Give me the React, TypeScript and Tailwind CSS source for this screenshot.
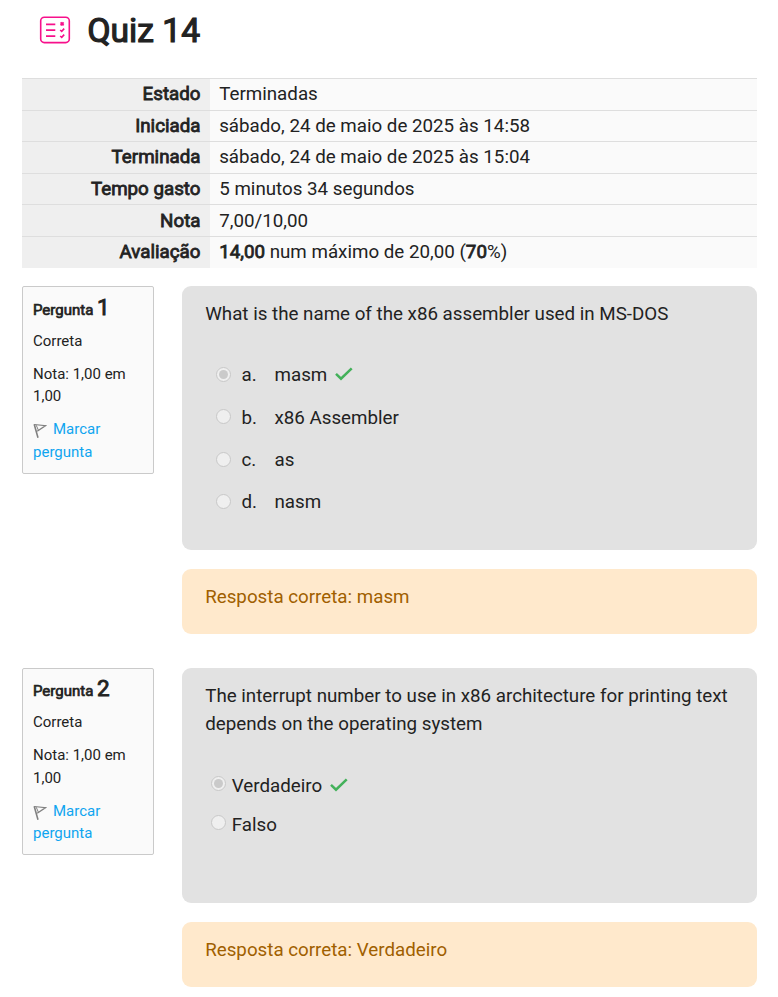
import type { ReactNode } from "react";

const summary: { label: string; value: ReactNode; height: string }[] = [
  { label: "Estado", value: "Terminadas", height: "h-[32px] leading-[30px]" },
  { label: "Iniciada", value: "sábado, 24 de maio de 2025 às 14:58", height: "h-[31px] leading-[30px]" },
  { label: "Terminada", value: "sábado, 24 de maio de 2025 às 15:04", height: "h-[32px] leading-[30px]" },
  { label: "Tempo gasto", value: "5 minutos 34 segundos", height: "h-[31px] leading-[30px]" },
  { label: "Nota", value: "7,00/10,00", height: "h-[32px] leading-[32px]" },
  {
    label: "Avaliação",
    value: (
      <>
        <b className="font-normal [-webkit-text-stroke:0.8px]">14,00</b> num máximo de 20,00 (
        <b className="font-normal [-webkit-text-stroke:0.8px]">70</b>%)
      </>
    ),
    height: "h-[32px] leading-[30px]",
  },
];

function QuizIcon() {
  return (
    <svg width="32" height="28" viewBox="0 0 32 28" fill="none" stroke="#f7108b" strokeWidth="1.6">
      <rect x="1.7" y="1.2" width="28.6" height="25.4" rx="3.6" />
      <path d="M7 8.3h9.3M7 14.2h9.3M7 20.1h9.3" strokeWidth="1.7" />
      <path d="M21.6 6.3l3 3M24.6 6.3l-3 3" strokeWidth="1.9" />
      <path d="M21.2 14l1.5 1.4 2.5-2.8M21.2 20l1.5 1.4 2.5-2.8" strokeWidth="1.6" />
    </svg>
  );
}

function FlagIcon() {
  return (
    <svg className="mr-[6px] inline-block align-[-5px]" width="14" height="16" viewBox="0 0 14 16" fill="none" stroke="#808080">
      <path d="M1.2 1.2L5 14.8" strokeWidth="1.6" />
      <path d="M1.2 1.5L12.6 2.6L4.2 8.2" strokeWidth="1.2" />
      <path d="M3.2 2.2L5.3 7" strokeWidth="1" />
    </svg>
  );
}

function Check() {
  return (
    <svg className="-mt-[2px] ml-2" width="18" height="14" viewBox="0 0 18 14" fill="none" stroke="#43b15a" strokeWidth="2.5">
      <path d="M1 6.8L6 11.7L16.7 1.3" />
    </svg>
  );
}

function Radio({ checked }: { checked?: boolean }) {
  return (
    <span className="flex size-[15px] shrink-0 items-center justify-center rounded-full border border-[#c8c8c8] bg-[#efefef]">
      {checked && <span className="size-[9px] rounded-full bg-[#cacaca]" />}
    </span>
  );
}

function Info({ number, height }: { number: number; height: string }) {
  return (
    <aside className={`w-[132px] shrink-0 rounded-[2px] border border-[#cacaca] bg-[#fafafa] px-[10px] text-[15px] leading-[22.5px] ${height}`}>
      <h3 className={`h-[32px] leading-[32px] [-webkit-text-stroke:0.7px] ${number === 1 ? "mt-[4px]" : "mt-[3px]"}`}>
        Pergunta <span className="text-[22.5px] [-webkit-text-stroke:0.9px]">{number}</span>
      </h3>
      <p className="mt-[7px]">Correta</p>
      <p className={number === 1 ? "mt-[10px]" : "mt-[10.5px]"}>Nota: 1,00 em 1,00</p>
      <p className="mt-[10.5px] text-[#0fa5f0]">
        <FlagIcon />
        Marcar pergunta
      </p>
    </aside>
  );
}

function Feedback({ answer }: { answer: string }) {
  return (
    <div className="mt-[19px] h-[65px] rounded-[9px] bg-[#ffe9cc] px-[23.2px] pt-[14px] text-[#a05f00]">
      Resposta correta: {answer}
    </div>
  );
}

const choices = [
  { letter: "a.", text: "masm", checked: true },
  { letter: "b.", text: "x86 Assembler" },
  { letter: "c.", text: "as" },
  { letter: "d.", text: "nasm" },
];

export default function App() {
  return (
    <main className="h-[997px] w-[778px] overflow-hidden bg-white pl-[22px] pr-[21px] font-[Roboto,sans-serif] text-[18.75px] leading-[28.125px] text-[#222]">
      <header className="flex h-[78px] items-start pl-[17px] pt-[16px]">
        <QuizIcon />
        <h1 className="-mt-[5px] ml-[16.5px] text-[33.6px] font-normal leading-[40px] [-webkit-text-stroke:1.2px]">Quiz 14</h1>
      </header>

      <div className="h-[190px]">
        {summary.map((row) => (
          <div key={row.label} className={`flex border-t border-[#dedede] bg-[#fafafa] ${row.height}`}>
            <div className="w-[188px] bg-[#efefef] pr-[9.5px] text-right [-webkit-text-stroke:0.8px]">{row.label}</div>
            <div className="pl-[9.2px]">{row.value}</div>
          </div>
        ))}
      </div>

      <section className="mt-[18px] flex gap-[28px]">
        <Info number={1} height="h-[188px]" />
        <div className="flex-1">
          <div className="h-[264px] rounded-[9px] bg-[#e2e2e2] px-[23.2px] pt-[14px]">
            <p>What is the name of the x86 assembler used in MS-DOS</p>
            <div className="mt-[26px] pl-[10.5px]">
              {choices.map((c) => (
                <div key={c.letter} className="flex h-[42.3px] items-center">
                  <span className="-mt-[1.5px]">
                    <Radio checked={c.checked} />
                  </span>
                  <span className="ml-[10.8px] w-[33px]">{c.letter}</span>
                  <span>{c.text}</span>
                  {c.checked && <Check />}
                </div>
              ))}
            </div>
          </div>
          <Feedback answer="masm" />
        </div>
      </section>

      <section className="mt-[34px] flex gap-[28px]">
        <Info number={2} height="h-[187px]" />
        <div className="flex-1">
          <div className="h-[235px] rounded-[9px] bg-[#e2e2e2] px-[23.2px] pt-[14px]">
            <p>The interrupt number to use in x86 architecture for printing text depends on the operating system</p>
            <div className="mt-[28px] pl-[5.8px]">
              {["Verdadeiro", "Falso"].map((text, i) => (
                <div key={text} className="flex h-[39px] items-center">
                  <span className="-mt-[4px]">
                    <Radio checked={i === 0} />
                  </span>
                  <span className="ml-[5.8px]">{text}</span>
                  {i === 0 && <Check />}
                </div>
              ))}
            </div>
          </div>
          <Feedback answer="Verdadeiro" />
        </div>
      </section>
    </main>
  );
}
